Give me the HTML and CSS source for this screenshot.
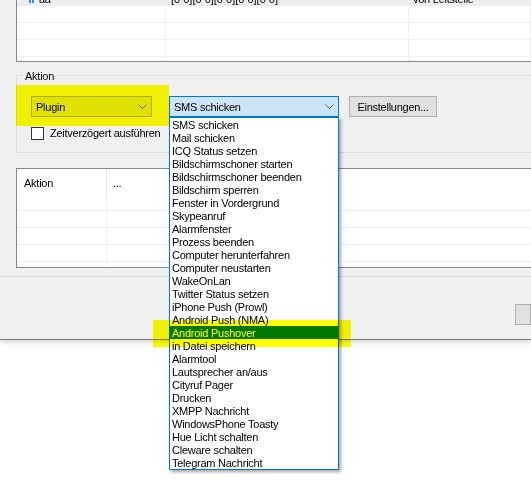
FILE: index.html
```html
<!DOCTYPE html>
<html lang="de">
<head>
<meta charset="utf-8">
<title>Aktion</title>
<link rel="stylesheet" href="styles.css">
</head>
<body>
<div class="page">
  <div class="window">
    <div class="toplist">
      <div class="trow sel">
        <div class="tcell c1"><svg class="ico" width="5" height="4" viewBox="0 0 5 4"><rect x="0" y="0" width="2" height="4" fill="#3b8ee8"/><rect x="3" y="0" width="2" height="4" fill="#3b8ee8"/></svg><span class="aa">aa</span></div>
        <div class="tcell c2">[0 0][0 0][0 0][0 0][0 0]</div>
        <div class="tcell c3">von Leitstelle</div>
      </div>
      <div class="trow"><div class="tcell"></div><div class="tcell"></div><div class="tcell"></div></div>
      <div class="trow"><div class="tcell"></div><div class="tcell"></div><div class="tcell"></div></div>
      <div class="trow"><div class="tcell"></div><div class="tcell"></div><div class="tcell"></div></div>
      <div class="trow"><div class="tcell"></div><div class="tcell"></div><div class="tcell"></div></div>
    </div>

    <div class="group">
      <span class="legend">Aktion</span>
      <div class="grow">
        <div class="combo plugin"><span>Plugin</span><svg class="chev" width="9" height="5" viewBox="0 0 9 5"><path d="M0.5 0.5 L4.5 4.5 L8.5 0.5" fill="none" stroke="#606060" stroke-width="1"/></svg></div>
        <div class="combo active"><span>SMS schicken</span><svg class="chev" width="9" height="5" viewBox="0 0 9 5"><path d="M0.5 0.5 L4.5 4.5 L8.5 0.5" fill="none" stroke="#606060" stroke-width="1"/></svg></div>
        <div class="btn">Einstellungen...</div>
      </div>
      <div class="check"><span class="box"></span><span>Zeitverzögert ausführen</span></div>
    </div>

    <div class="lowlist">
      <div class="lhead"><div class="hcell">Aktion</div><div class="hcell">...</div></div>
      <div class="lrow"><div></div><div></div></div>
      <div class="lrow"><div></div><div></div></div>
      <div class="lrow"><div></div><div></div></div>
      <div class="lrow"><div></div><div></div></div>
      <div class="lrow"><div></div><div></div></div>
    </div>

    <div class="sep"></div>
    <div class="bottombar"><div class="btn small"></div></div>
  </div>

  <ul class="dropdown">
    <li>SMS schicken</li>
    <li>Mail schicken</li>
    <li>ICQ Status setzen</li>
    <li>Bildschirmschoner starten</li>
    <li>Bildschirmschoner beenden</li>
    <li>Bildschirm sperren</li>
    <li>Fenster in Vordergrund</li>
    <li>Skypeanruf</li>
    <li>Alarmfenster</li>
    <li>Prozess beenden</li>
    <li>Computer herunterfahren</li>
    <li>Computer neustarten</li>
    <li>WakeOnLan</li>
    <li>Twitter Status setzen</li>
    <li>iPhone Push (Prowl)</li>
    <li>Android Push (NMA)</li>
    <li class="sel">Android Pushover</li>
    <li>in Datei speichern</li>
    <li>Alarmtool</li>
    <li>Lautsprecher an/aus</li>
    <li>Cityruf Pager</li>
    <li>Drucken</li>
    <li>XMPP Nachricht</li>
    <li>WindowsPhone Toasty</li>
    <li>Hue Licht schalten</li>
    <li>Cleware schalten</li>
    <li>Telegram Nachricht</li>
  </ul>

  <div class="hl hl1"></div>
  <div class="hl hl2"></div>
</div>
</body>
</html>
```

FILE: styles.css
```css
html, body {
  margin: 0;
  padding: 0;
}

body {
  width: 531px;
  height: 488px;
  overflow: hidden;
  background: #ffffff;
  font-family: "Liberation Sans", Arial, sans-serif;
  font-size: 11px;
  letter-spacing: -0.25px;
  color: #000000;
}

.page {
  position: relative;
  width: 531px;
  height: 488px;
}

.window {
  display: flow-root;
  height: 339px;
  background: #f0f0f0;
  border-bottom: 1px solid #7a7a7a;
  box-shadow: 0 2px 6px rgba(0, 0, 0, 0.18);
}

/* top list view */
.toplist {
  margin: -11px 0 0 16px;
  height: 72px;
  overflow: hidden;
  background: #ffffff;
  border-left: 1px solid #828790;
  border-bottom: 1px solid #828790;
}

.trow {
  display: grid;
  grid-template-columns: 149px 243px 1fr;
  height: 17px;
  box-sizing: border-box;
  border-bottom: 1px solid #f0f0f0;
}

.tcell {
  border-right: 1px solid #f0f0f0;
  white-space: nowrap;
  overflow: hidden;
}

.trow.sel {
  background: #eeeeee;
  border-bottom-color: #eeeeee;
}

.trow.sel .tcell {
  border-right-color: #eeeeee;
  padding-top: 5px;
  line-height: 11px;
}

.c1 {
  padding-left: 12px;
}

.ico {
  vertical-align: baseline;
}

.aa {
  margin-left: 5px;
}

.c2 {
  padding-left: 5px;
  letter-spacing: 0;
}

.c3 {
  padding-left: 4px;
}

/* group box */
.group {
  margin: 13px 0 0 16px;
  height: 76px;
  border: 1px solid #dcdcdc;
  border-right: none;
}

.legend {
  display: block;
  width: max-content;
  margin: -6px 0 0 6px;
  padding: 0 2px;
  line-height: 13px;
  background: #f0f0f0;
}

.grow {
  display: flex;
  margin-top: 13px;
  padding-left: 14px;
  height: 21px;
}

.combo {
  box-sizing: border-box;
  height: 21px;
  border: 1px solid #adadad;
  background: #e1e1e1;
  display: flex;
  align-items: center;
  justify-content: space-between;
  padding: 0 4px 0 4px;
}

.combo.plugin {
  width: 121px;
}

.combo.active {
  width: 170px;
  margin-left: 17px;
  background: #cce4f7;
  border-color: #0078d7;
}

.chev {
  display: block;
}

.btn {
  box-sizing: border-box;
  width: 88px;
  height: 21px;
  margin-left: 10px;
  border: 1px solid #adadad;
  background: #e1e1e1;
  display: flex;
  align-items: center;
  justify-content: center;
}

.check {
  display: flex;
  align-items: center;
  margin-top: 10px;
  padding-left: 14px;
  height: 13px;
  line-height: 13px;
}

.box {
  width: 13px;
  height: 13px;
  box-sizing: border-box;
  border: 1px solid #333333;
  background: #ffffff;
  margin-right: 6px;
}

/* lower list view */
.lowlist {
  margin: 15px 0 0 16px;
  height: 98px;
  overflow: hidden;
  border: 1px solid #828790;
  border-right: none;
  background: #ffffff;
}

.lhead {
  display: grid;
  grid-template-columns: 90px 1fr;
  height: 25px;
}

.hcell {
  box-sizing: border-box;
  padding: 6px 0 0 6px;
  line-height: 17px;
}

.hcell:first-child {
  padding-left: 7px;
  border-right: 1px solid #e5e5e5;
}

.lrow {
  display: grid;
  grid-template-columns: 90px 1fr;
  height: 17px;
  box-sizing: border-box;
  border-bottom: 1px solid #f0f0f0;
}

.lrow div:first-child {
  border-right: 1px solid #f0f0f0;
}

.sep {
  margin-top: 8px;
  height: 1px;
  background: #d9d9d9;
}

.bottombar {
  display: flex;
  margin-top: 27px;
}

.btn.small {
  margin-left: 515px;
  width: 40px;
}

/* dropdown list */
.dropdown {
  position: absolute;
  left: 169px;
  top: 117px;
  width: 170px;
  box-sizing: border-box;
  margin: 0;
  padding: 0;
  list-style: none;
  background: #ffffff;
  border: 1px solid #0078d7;
  box-shadow: 2px 2px 3px rgba(0, 0, 0, 0.35);
}

.dropdown li {
  box-sizing: border-box;
  height: 13px;
  padding: 1px 0 0 2px;
  line-height: 12px;
  white-space: nowrap;
}

.dropdown li.sel {
  background: #0078d7;
  color: #ffffff;
}

/* highlighter marks */
.hl {
  position: absolute;
  background: #ffff00;
  mix-blend-mode: multiply;
}

.hl1 {
  left: 16px;
  top: 85px;
  width: 153px;
  height: 41px;
}

.hl2 {
  left: 153px;
  top: 320px;
  width: 198px;
  height: 27px;
}
```
